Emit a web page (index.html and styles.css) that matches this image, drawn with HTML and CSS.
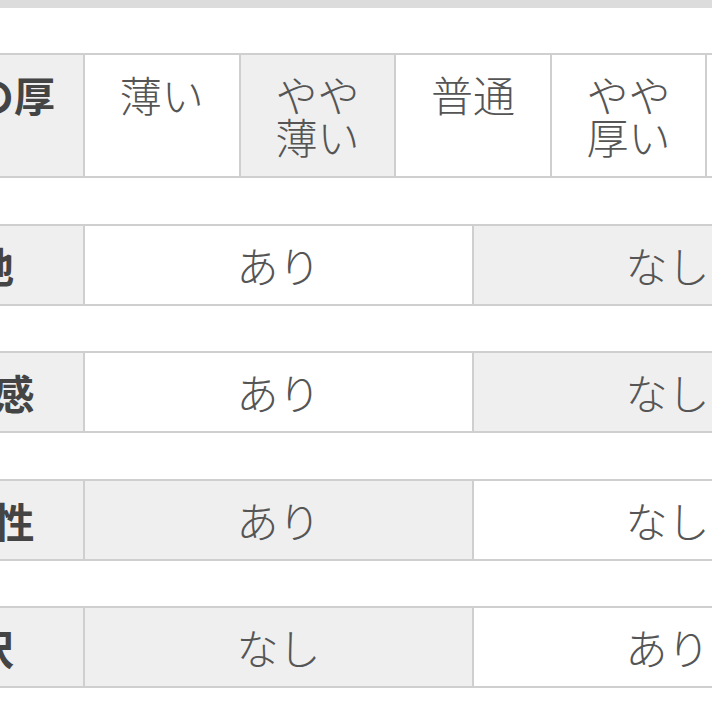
FILE: index.html
```html
<!DOCTYPE html>
<html lang="ja">
<head>
<meta charset="utf-8">
<title>生地の特徴</title>
<link rel="stylesheet" href="styles.css">
</head>
<body>
<div class="topband"></div>
<div class="tables">
  <div class="spec spec-5">
    <div class="label">生地の厚さ</div>
    <div class="val">薄い</div>
    <div class="val on">やや薄い</div>
    <div class="val">普通</div>
    <div class="val">やや厚い</div>
    <div class="val">厚い</div>
  </div>
  <div class="spec spec-2">
    <div class="label">裏地</div>
    <div class="val">あり</div>
    <div class="val on">なし</div>
  </div>
  <div class="spec spec-2">
    <div class="label">透け感</div>
    <div class="val">あり</div>
    <div class="val on">なし</div>
  </div>
  <div class="spec spec-2">
    <div class="label">伸縮性</div>
    <div class="val on">あり</div>
    <div class="val">なし</div>
  </div>
  <div class="spec spec-2">
    <div class="label">光沢</div>
    <div class="val on">なし</div>
    <div class="val">あり</div>
  </div>
</div>
</body>
</html>
```
FILE: styles.css
```css
html, body {
  margin: 0;
  padding: 0;
  background: #ffffff;
  overflow: hidden;
}

body {
  font-family: "Noto Sans CJK JP", "Noto Sans", sans-serif;
  width: 712px;
  height: 712px;
}

.topband {
  height: 8px;
  background: #dcdcdc;
}

.tables {
  display: flex;
  flex-direction: column;
  gap: 45.5px;
  margin-top: 45px;
  margin-left: -139px;
  width: 1002px;
}

.spec {
  display: grid;
  gap: 2px;
  padding: 2px;
  background: #cfcfcf;
  width: 1002px;
  box-sizing: border-box;
}

.spec-5 {
  grid-template-columns: 220px repeat(5, 1fr);
}

.spec-2 {
  grid-template-columns: 220px repeat(2, 1fr);
}

.label {
  background: #efefef;
  color: #444444;
  font-weight: 700;
  font-size: 41px;
  line-height: 42px;
  text-align: center;
  padding: 18px 12px 19px;
}

.val {
  background: #ffffff;
  color: #555555;
  font-weight: 200;
  font-size: 42px;
  line-height: 42px;
  text-align: center;
  padding: 18px 16px 19px;
}

.spec-2 .label,
.spec-2 .val {
  padding-bottom: 18px;
}

.val.on {
  background: #efefef;
}
```
